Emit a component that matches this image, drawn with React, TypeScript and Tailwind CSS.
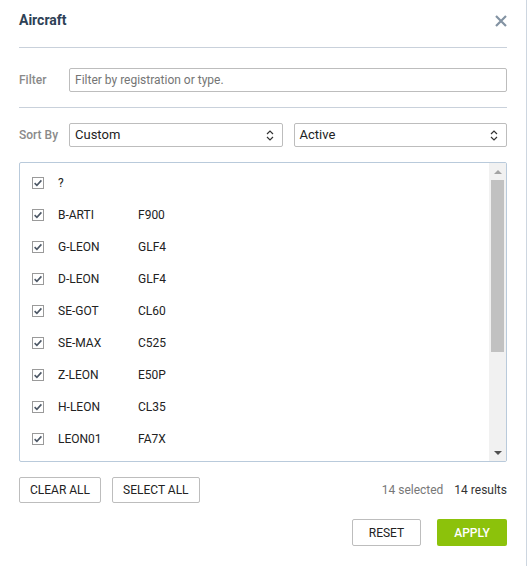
const aircraft = [
  { reg: "?", type: "" },
  { reg: "B-ARTI", type: "F900" },
  { reg: "G-LEON", type: "GLF4" },
  { reg: "D-LEON", type: "GLF4" },
  { reg: "SE-GOT", type: "CL60" },
  { reg: "SE-MAX", type: "C525" },
  { reg: "Z-LEON", type: "E50P" },
  { reg: "H-LEON", type: "CL35" },
  { reg: "LEON01", type: "FA7X" },
]

function CheckBox() {
  return (
    <svg width="12" height="12" viewBox="0 0 12 12" className="shrink-0">
      <rect x="0.5" y="0.5" width="11" height="11" fill="#fff" stroke="#9a9a9a" />
      <path d="M2.6 6.2 L4.9 8.4 L9.4 3.4" fill="none" stroke="#4d5866" strokeWidth="1.6" />
    </svg>
  )
}

function UpDown() {
  return (
    <svg width="8" height="11" viewBox="0 0 8 11" className="shrink-0">
      <path d="M1 4 L4 1 L7 4 M1 7 L4 10 L7 7" fill="none" stroke="#333" strokeWidth="1.2" />
    </svg>
  )
}

function CloseIcon() {
  return (
    <svg width="12" height="12" viewBox="0 0 12 12" className="mt-[15px] shrink-0">
      <path d="M1 1 L11 11 M11 1 L1 11" fill="none" stroke="#8393a3" strokeWidth="2.2" />
    </svg>
  )
}

function Select({ value }: { value: string }) {
  return (
    <div className="flex h-[24px] items-center justify-between rounded-[2px] border border-[#bdbdbd] pl-[5px] pr-[8px] text-[13px] text-[#222]">
      <span>{value}</span>
      <UpDown />
    </div>
  )
}

export default function App() {
  return (
    <div className="h-[566px] w-[527px] border-r border-[#cdd6e0] bg-white pl-[19px] pr-[19px] font-['Roboto',sans-serif]">
      {/* Header */}
      <div className="flex h-[47px] items-start justify-between">
        <h1 className="pt-[12px] text-[14px] font-bold leading-[17px] text-[#2e4156]">Aircraft</h1>
        <CloseIcon />
      </div>
      <div className="h-px bg-[#c9d1db]" />

      {/* Filter */}
      <div className="flex items-center pb-[15px] pt-[20px]">
        <span className="w-[50px] text-[12px] font-medium text-[#8a8a8a]">Filter</span>
        <input
          className="h-[24px] flex-1 rounded-[2px] border border-[#bdbdbd] px-[5px] text-[12px] text-[#222] outline-none placeholder:text-[#757575]"
          placeholder="Filter by registration or type."
        />
      </div>
      <div className="h-px bg-[#c9d1db]" />

      {/* Sorting */}
      <div className="flex items-center pt-[15px]">
        <span className="w-[50px] text-[12px] font-medium text-[#8a8a8a]">Sort By</span>
        <div className="grid flex-1 grid-cols-2 gap-[11px]">
          <Select value="Custom" />
          <Select value="Active" />
        </div>
      </div>

      {/* Aircraft list */}
      <div className="mt-[15px] flex h-[300px] overflow-hidden rounded-[2px] border border-[#b9cadb]">
        <div className="flex-1 overflow-hidden pt-[4px]">
          {aircraft.map((a) => (
            <div key={a.reg} className="flex h-[32px] items-center pl-[12px] text-[12px] text-[#222]">
              <CheckBox />
              <span className="ml-[14px] w-[80px]">{a.reg}</span>
              <span>{a.type}</span>
            </div>
          ))}
        </div>
        <div className="flex w-[17px] flex-col bg-[#f1f1f1]">
          <div className="flex h-[17px] items-center justify-center">
            <div className="h-0 w-0 border-x-[4px] border-b-[4px] border-x-transparent border-b-[#a3a3a3]" />
          </div>
          <div className="mx-[2px] h-[172px] bg-[#c1c1c1]" />
          <div className="flex-1" />
          <div className="flex h-[17px] items-center justify-center">
            <div className="h-0 w-0 border-x-[4px] border-t-[4px] border-x-transparent border-t-[#505050]" />
          </div>
        </div>
      </div>

      {/* Selection actions */}
      <div className="mt-[15px] flex items-center">
        <button className="h-[26px] rounded-[2px] border border-[#bdbdbd] px-[10px] text-[12px] text-[#222]">CLEAR ALL</button>
        <button className="ml-[11px] h-[26px] rounded-[2px] border border-[#bdbdbd] px-[10px] text-[12px] text-[#222]">SELECT ALL</button>
        <div className="ml-auto text-[12px]">
          <span className="text-[#777]">14 selected</span>
          <span className="ml-[11px] text-[#333]">14 results</span>
        </div>
      </div>

      {/* Footer */}
      <div className="mt-[16px] flex justify-end gap-[16px]">
        <button className="h-[27px] w-[69px] rounded-[2px] border border-[#bdbdbd] text-[12px] text-[#222]">RESET</button>
        <button className="h-[27px] w-[70px] rounded-[2px] bg-[#8cc20b] text-[12px] font-medium text-white">APPLY</button>
      </div>
    </div>
  )
}
